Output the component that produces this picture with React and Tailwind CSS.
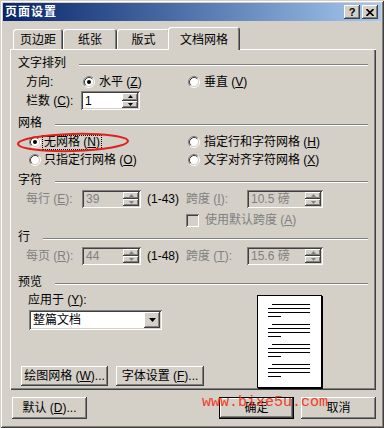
import React from "react";

const raised =
  "shadow-[inset_-1px_-1px_#404040,inset_1px_1px_#ffffff,inset_-2px_-2px_#808080,inset_2px_2px_#d4d0c8]";
const sunken =
  "shadow-[inset_1px_1px_#808080,inset_-1px_-1px_#ffffff,inset_2px_2px_#404040,inset_-2px_-2px_#d4d0c8]";

function U({ children }) {
  return <span className="underline underline-offset-[1px]">{children}</span>;
}

function Radio({ checked }) {
  return (
    <svg width="12" height="12" viewBox="0 0 12 12" className="block shrink-0">
      <circle cx="6" cy="6" r="4.2" fill="#ffffff" />
      <path d="M2.11 9.89 A5.5 5.5 0 0 1 9.89 2.11" fill="none" stroke="#808080" strokeWidth="1" />
      <path d="M9.89 2.11 A5.5 5.5 0 0 1 2.11 9.89" fill="none" stroke="#ffffff" strokeWidth="1" />
      <path d="M2.82 9.18 A4.5 4.5 0 0 1 9.18 2.82" fill="none" stroke="#404040" strokeWidth="1" />
      <path d="M9.18 2.82 A4.5 4.5 0 0 1 2.82 9.18" fill="none" stroke="#d4d0c8" strokeWidth="1" />
      {checked && <circle cx="6" cy="6" r="2" fill="#000000" />}
    </svg>
  );
}

function Spin({ disabled }) {
  const c = disabled ? "#808080" : "#000000";
  return (
    <div className="flex h-full w-[16px] shrink-0 flex-col">
      <div className={`flex flex-1 items-center justify-center bg-[#d4d0c8] ${raised}`}>
        <svg width="5" height="3" className="block">
          <path d="M2.5 0 L5 3 L0 3Z" fill={c} />
        </svg>
      </div>
      <div className={`flex flex-1 items-center justify-center bg-[#d4d0c8] ${raised}`}>
        <svg width="5" height="3" className="block">
          <path d="M0 0 L5 0 L2.5 3Z" fill={c} />
        </svg>
      </div>
    </div>
  );
}

function Field({ w, value, disabled }) {
  return (
    <div
      className={`flex h-full shrink-0 p-[2px] ${sunken} ${w} ${
        disabled ? "bg-[#d4d0c8] text-[#808080]" : "bg-white text-black"
      }`}
    >
      <div className="flex flex-1 items-center pl-[2px]">{value}</div>
      <Spin disabled={disabled} />
    </div>
  );
}

function Header({ children, className }) {
  return (
    <div className={`flex h-[14px] items-center ${className}`}>
      <span>{children}</span>
      <div className="ml-[13px] mt-[4px] h-[2px] flex-1 border-t border-b border-t-[#808080] border-b-white" />
    </div>
  );
}

function Tab({ w, children }) {
  return (
    <div
      className={`flex h-[20px] items-center justify-center rounded-t-[3px] pt-[1px] shadow-[inset_1px_1px_#ffffff,inset_-1px_0_#404040,inset_-2px_0_#808080] ${w}`}
    >
      {children}
    </div>
  );
}

function Button({ w, h, children, def }) {
  return (
    <div
      className={`flex shrink-0 items-center justify-center bg-[#d4d0c8] ${raised} ${w} ${h} ${
        def ? "border border-black" : ""
      }`}
    >
      {children}
    </div>
  );
}

function TitleBtn({ children }) {
  return (
    <div className={`flex h-[14px] w-[16px] items-center justify-center bg-[#d4d0c8] ${raised}`}>
      {children}
    </div>
  );
}

function PageGroup() {
  return (
    <div className="flex flex-col gap-[3px]">
      <div className="ml-[14px] h-[1px] w-[38px] bg-black" />
      <div className="ml-[10px] h-[1px] w-[42px] bg-black" />
      <div className="ml-[10px] h-[1px] w-[42px] bg-black" />
      <div className="ml-[10px] h-[1px] w-[13px] bg-black" />
    </div>
  );
}

export default function App() {
  return (
    <div className="relative h-[428px] w-[384px] overflow-hidden bg-[#d4d0c8] font-['Liberation_Sans','Noto_Sans_CJK_SC',sans-serif] text-[12px] leading-[14px] text-black shadow-[inset_1px_1px_#d4d0c8,inset_-1px_-1px_#404040,inset_2px_2px_#ffffff,inset_-2px_-2px_#808080]">
      {/* title bar */}
      <div className="px-[3px] pt-[3px]">
        <div className="flex h-[18px] items-center justify-between bg-linear-to-r from-[#0a246a] to-[#a6caf0] pl-[2px] pr-[3px]">
          <span className="font-bold tracking-[1px] text-white">页面设置</span>
          <div className="flex gap-[2px]">
            <TitleBtn>
              <span className="text-[11px] font-bold leading-[11px]">?</span>
            </TitleBtn>
            <TitleBtn>
              <svg width="8" height="7" viewBox="0 0 8 7" className="block">
                <path d="M0.5 0 L7.5 7 M7.5 0 L0.5 7" stroke="#000000" strokeWidth="1.6" />
              </svg>
            </TitleBtn>
          </div>
        </div>
      </div>

      {/* tabs */}
      <div className="mt-[6px] flex h-[22px] items-end pl-[13px]">
        <Tab w="w-[50px]">页边距</Tab>
        <Tab w="w-[54px]">纸张</Tab>
        <Tab w="w-[53px]">版式</Tab>
        <div className="relative z-10 -mb-[1px] -ml-[2px] flex h-[23px] w-[72px] items-center justify-center rounded-t-[3px] bg-[#d4d0c8] pt-[3px] shadow-[inset_1px_1px_#ffffff,inset_-1px_0_#404040,inset_-2px_0_#808080]">
          文档网格
        </div>
      </div>

      {/* panel */}
      <div className="ml-[10px] h-[341px] w-[366px] px-[8px] pt-[7px] shadow-[inset_1px_1px_#ffffff,inset_-1px_-1px_#404040,inset_-2px_-2px_#808080]">
        <Header>文字排列</Header>
        <div className="mt-[3px] flex h-[18px] items-center pl-[8px]">
          <div className="w-[57px]">方向:</div>
          <div className="flex w-[105px] items-center gap-[4px]">
            <Radio checked />
            <span>
              水平 (<U>Z</U>)
            </span>
          </div>
          <div className="flex items-center gap-[4px]">
            <Radio />
            <span>
              垂直 (<U>V</U>)
            </span>
          </div>
        </div>
        <div className="flex h-[19px] items-center pl-[8px]">
          <div className="w-[55px]">
            栏数 (<U>C</U>):
          </div>
          <Field w="w-[59px]" value="1" />
        </div>

        <Header className="mt-[6px]">网格</Header>
        <div className="relative mt-[3px] flex h-[18px] items-center pl-[11px]">
          <div className="flex w-[159px] items-center gap-[1px]">
            <Radio checked />
            <span className="border border-dotted border-black px-[1px] leading-[13px]">
              无网格 (<U>N</U>)
            </span>
          </div>
          <div className="flex items-center gap-[4px]">
            <Radio />
            <span>
              指定行和字符网格 (<U>H</U>)
            </span>
          </div>
          <svg width="114" height="21" className="absolute left-[-2px] top-[-1px]">
            <ellipse
              cx="57"
              cy="10.5"
              rx="55"
              ry="8.5"
              fill="none"
              stroke="#e0201c"
              strokeWidth="2"
              transform="rotate(-1.5 57 10.5)"
            />
          </svg>
        </div>
        <div className="flex h-[18px] items-center pl-[11px]">
          <div className="flex w-[159px] items-center gap-[3px]">
            <Radio />
            <span>
              只指定行网格 (<U>O</U>)
            </span>
          </div>
          <div className="flex items-center gap-[4px]">
            <Radio />
            <span>
              文字对齐字符网格 (<U>X</U>)
            </span>
          </div>
        </div>

        <Header className="mt-[4px]">字符</Header>
        <div className="mt-[3px] flex h-[18px] items-center pl-[8px]">
          <div className="w-[56px] text-[#808080]">
            每行 (<U>E</U>):
          </div>
          <Field w="w-[59px]" value="39" disabled />
          <div className="w-[45px] pl-[6px]">(1-43)</div>
          <div className="w-[61px] text-[#808080]">
            跨度 (<U>I</U>):
          </div>
          <Field w="w-[76px]" value="10.5 磅" disabled />
        </div>
        <div className="mt-[3px] flex h-[18px] items-center pl-[168px]">
          <div className={`h-[13px] w-[13px] bg-[#d4d0c8] ${sunken}`} />
          <span className="ml-[6px] text-[#808080]">
            使用默认跨度 (<U>A</U>)
          </span>
        </div>

        <Header className="mt-[1px]">行</Header>
        <div className="mt-[3px] flex h-[18px] items-center pl-[8px]">
          <div className="w-[56px] text-[#808080]">
            每页 (<U>R</U>):
          </div>
          <Field w="w-[59px]" value="44" disabled />
          <div className="w-[45px] pl-[6px]">(1-48)</div>
          <div className="w-[61px] text-[#808080]">
            跨度 (<U>T</U>):
          </div>
          <Field w="w-[76px]" value="15.6 磅" disabled />
        </div>

        <Header className="mt-[10px]">预览</Header>
        <div className="mt-[2px] flex">
          <div className="flex w-[239px] flex-col">
            <div className="mt-[2px] h-[14px] pl-[10px]">
              应用于 (<U>Y</U>):
            </div>
            <div className={`ml-[11px] mt-[3px] flex h-[20px] w-[133px] bg-white p-[2px] ${sunken}`}>
              <div className="flex flex-1 items-center pl-[2px]">整篇文档</div>
              <div className={`flex h-[16px] w-[16px] items-center justify-center bg-[#d4d0c8] ${raised}`}>
                <svg width="7" height="4" className="block">
                  <path d="M0 0 L7 0 L3.5 4Z" fill="#000000" />
                </svg>
              </div>
            </div>
            <div className="mt-[36px] flex gap-[8px] pl-[3px]">
              <Button w="w-[87px]" h="h-[20px]">
                绘图网格 (<U>W</U>)...
              </Button>
              <Button w="w-[88px]" h="h-[20px]">
                字体设置 (<U>F</U>)...
              </Button>
            </div>
          </div>
          <div className="mt-[4px] flex h-[93px] w-[65px] flex-col gap-[7px] border border-black bg-white pt-[8px] shadow-[1px_1px_0_#000000]">
            <PageGroup />
            <PageGroup />
            <PageGroup />
            <PageGroup />
          </div>
        </div>
      </div>

      {/* bottom buttons */}
      <div className="mt-[7px] flex pl-[12px] pr-[8px]">
        <Button w="w-[75px]" h="h-[22px]">
          默认 (<U>D</U>)...
        </Button>
        <div className="ml-auto flex gap-[7px]">
          <Button w="w-[75px]" h="h-[22px]" def>
            确定
          </Button>
          <Button w="w-[75px]" h="h-[22px]">
            取消
          </Button>
        </div>
      </div>

      {/* watermark */}
      <div className="absolute left-[202px] top-[395px] z-20 font-['Liberation_Mono',monospace] text-[15px] leading-[15px] text-[#f03c28]">
        www.bixe5u.com
      </div>
    </div>
  );
}
